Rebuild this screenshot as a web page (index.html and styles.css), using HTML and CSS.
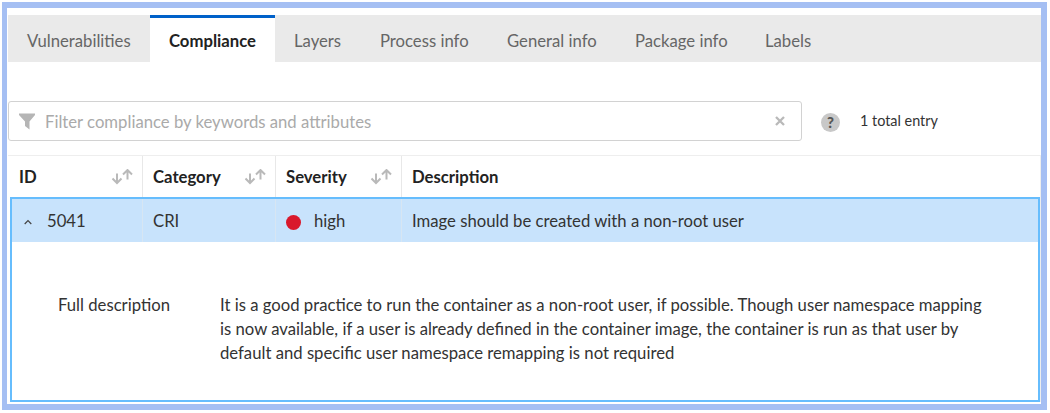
FILE: index.html
```html
<!DOCTYPE html>
<html lang="en">
<head>
<meta charset="utf-8">
<title>Compliance</title>
<link rel="stylesheet" href="styles.css">
</head>
<body>
<svg class="defs" width="0" height="0">
  <symbol id="sort" viewBox="0 0 22 16">
    <path d="M6 4.500v9M1.500 9.500L6 14l4.500-4.500M16.500 10.500V1.500M12 5.500L16.500 1 21 5.500" fill="none" stroke="currentColor" stroke-width="2"/>
  </symbol>
</svg>
<main class="frame">
  <nav class="tabs">
    <a class="tab tab-vulnerabilities"><span>Vulnerabilities</span></a>
    <a class="tab tab-active"><span>Compliance</span></a>
    <a class="tab tab-layers"><span>Layers</span></a>
    <a class="tab tab-process"><span>Process info</span></a>
    <a class="tab tab-general"><span>General info</span></a>
    <a class="tab tab-package"><span>Package info</span></a>
    <a class="tab"><span>Labels</span></a>
  </nav>
  <div class="toolbar">
    <div class="filter">
      <svg class="funnel" width="16" height="17" viewBox="0 0 16 17"><path d="M0 .500h16v1.500L10.500 8.500V16.500L6 13V8.500L0 2z" fill="#b5b5b5"/></svg>
      <span class="placeholder">Filter compliance by keywords and attributes</span>
      <svg class="clear" width="10" height="10" viewBox="0 0 10 10"><path d="M1 1l8 8M9 1L1 9" stroke="#b9b9b9" stroke-width="2.300"/></svg>
    </div>
    <span class="help">?</span>
    <span class="total">1 total entry</span>
  </div>
  <section class="table">
    <div class="row head">
      <div class="cell cell-id"><span>ID</span><svg class="sort"><use href="#sort"/></svg></div>
      <div class="cell"><span>Category</span><svg class="sort"><use href="#sort"/></svg></div>
      <div class="cell"><span>Severity</span><svg class="sort"><use href="#sort"/></svg></div>
      <div class="cell"><span>Description</span></div>
    </div>
    <div class="expanded">
      <div class="row entry">
        <div class="cell"><svg class="caret" width="8" height="6" viewBox="0 0 8 6"><path d="M.700 5L4 1.500 7.300 5" fill="none" stroke="#444" stroke-width="1.200"/></svg><span>5041</span></div>
        <div class="cell"><span>CRI</span></div>
        <div class="cell"><i class="dot"></i><span>high</span></div>
        <div class="cell"><span>Image should be created with a non-root user</span></div>
      </div>
      <div class="details">
        <div class="label">Full description</div>
        <div class="text">It is a good practice to run the container as a non-root user, if possible. Though user namespace mapping<br>is now available, if a user is already defined in the container image, the container is run as that user by<br>default and specific user namespace remapping is not required</div>
      </div>
    </div>
  </section>
</main>
</body>
</html>
```
FILE: styles.css
```css
* { box-sizing: border-box; }
body {
  margin: 0;
  padding: 2px;
  background: #fff;
  color: #333;
  font: 16.7px/24px Lato, Carlito, "Liberation Sans", sans-serif;
  white-space: nowrap;
}
.defs { display: block; }
.frame {
  width: 1045px;
  height: 408px;
  border: 6px solid #a5bff3;
  border-left-width: 5px;
  padding: 7px 0 0 1px;
}
.tabs { display: flex; height: 47px; background: #eaeaea; color: #666; }
.tab { display: flex; padding: 14px 0 0 19px; }
.tab-vulnerabilities { width: 142px; }
.tab-active {
  width: 125px;
  padding-top: 11px;
  border-top: 3px solid #0061c9;
  background: #fff;
  color: #222;
  font-weight: 700;
}
.tab-layers { width: 86px; }
.tab-process { width: 127px; }
.tab-general { width: 128px; }
.tab-package { width: 130px; }
.toolbar { display: flex; align-items: center; height: 40px; margin-top: 39px; }
.filter {
  display: flex;
  align-items: center;
  width: 794px;
  height: 40px;
  padding: 0 16px 0 10px;
  border: 1px solid #d2d2d2;
  border-radius: 3px;
  color: #aaa;
}
.placeholder { flex: 1; margin-left: 10px; padding-top: 2px; }
.help {
  width: 19px;
  height: 19px;
  margin: 2px 0 0 19px;
  border-radius: 50%;
  background: #c8c8c8;
  color: #555;
  font-size: 15px;
  font-weight: 900;
  line-height: 19px;
  text-align: center;
}
.total { margin-left: 20px; font-size: 14.4px; }
.table { margin-top: 14px; border: 1px solid #eee; border-bottom: 0; border-left: 0; }
.row { display: grid; grid-template-columns: 135px 133px 126px 1fr; }
.cell { display: flex; align-items: center; padding-left: 10px; border-right: 1px solid #e8e8e8; }
.cell span { padding-top: 1px; }
.cell-id { padding-left: 11px; }
.cell:last-child { border-right: 0; }
.head { height: 41px; font-weight: 700; color: #222; }
.sort { width: 22px; height: 16px; margin-left: auto; margin-right: 9px; color: #b9b9b9; }
.expanded { height: 205px; margin-left: 2px; border: 2px solid #66bdfd; }
.entry { height: 43px; background: #c8e3fc; grid-template-columns: 131px 133px 126px 1fr; }
.entry .cell { border-color: #d7e6f3; }
.caret { margin: 3px 15px 0 2px; }
.dot { width: 15px; height: 15px; margin: 3px 13px 0 0; border-radius: 50%; background: #d9192c; }
.details { display: flex; padding: 51px 0 0 46px; }
.label { width: 162px; }
```
